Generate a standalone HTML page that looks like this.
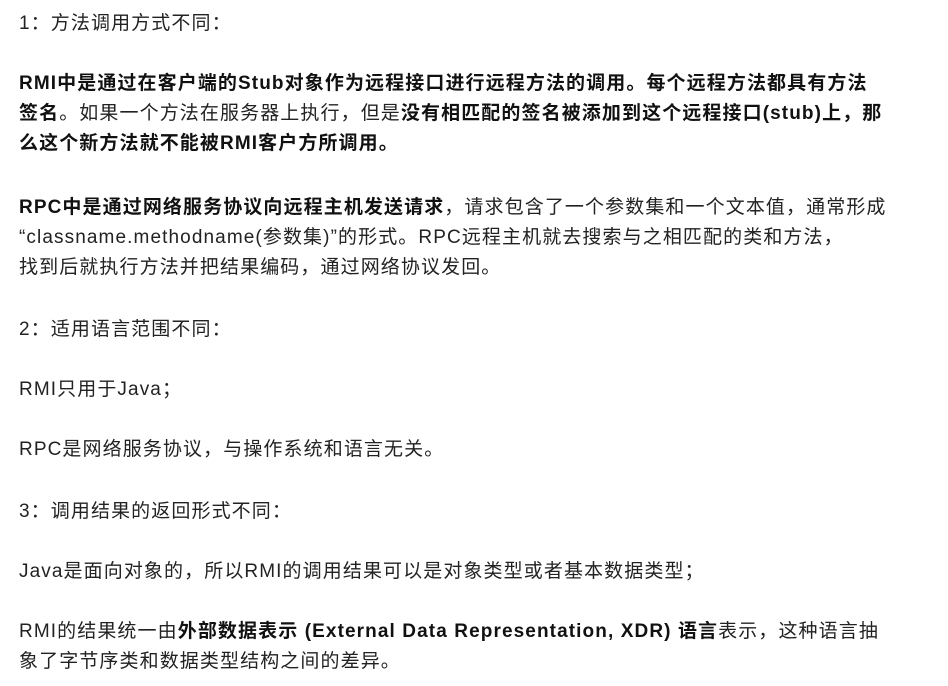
<!DOCTYPE html>
<html><head><meta charset="utf-8"><style>
body{margin:0;background:#fff;width:948px;height:686px;overflow:hidden;position:relative;font-family:"Liberation Sans","Noto Sans CJK SC",sans-serif;font-size:19px;letter-spacing:1.1px;color:#222;}
.l{position:absolute;left:19px;line-height:30px;white-space:nowrap;}
b{font-weight:bold;color:#111;}
</style></head><body>
<div class="l" style="top:9px">1：方法调用方式不同：</div>
<div class="l" style="top:69px"><b>RMI中是通过在客户端的Stub对象作为远程接口进行远程方法的调用。每个远程方法都具有方法</b></div>
<div class="l" style="top:99px"><b>签名</b>。如果一个方法在服务器上执行，但是<b>没有相匹配的签名被添加到这个远程接口(stub)上，那</b></div>
<div class="l" style="top:129px"><b>么这个新方法就不能被RMI客户方所调用。</b></div>
<div class="l" style="top:193px"><b>RPC中是通过网络服务协议向远程主机发送请求</b>，请求包含了一个参数集和一个文本值，通常形成</div>
<div class="l" style="top:223px">“classname.methodname(参数集)”的形式。RPC远程主机就去搜索与之相匹配的类和方法，</div>
<div class="l" style="top:253px">找到后就执行方法并把结果编码，通过网络协议发回。</div>
<div class="l" style="top:315px">2：适用语言范围不同：</div>
<div class="l" style="top:375px">RMI只用于Java；</div>
<div class="l" style="top:435px">RPC是网络服务协议，与操作系统和语言无关。</div>
<div class="l" style="top:497px">3：调用结果的返回形式不同：</div>
<div class="l" style="top:557px">Java是面向对象的，所以RMI的调用结果可以是对象类型或者基本数据类型；</div>
<div class="l" style="top:617px">RMI的结果统一由<b>外部数据表示 (External Data Representation, XDR) 语言</b>表示，这种语言抽</div>
<div class="l" style="top:647px">象了字节序类和数据类型结构之间的差异。</div>
</body></html>
